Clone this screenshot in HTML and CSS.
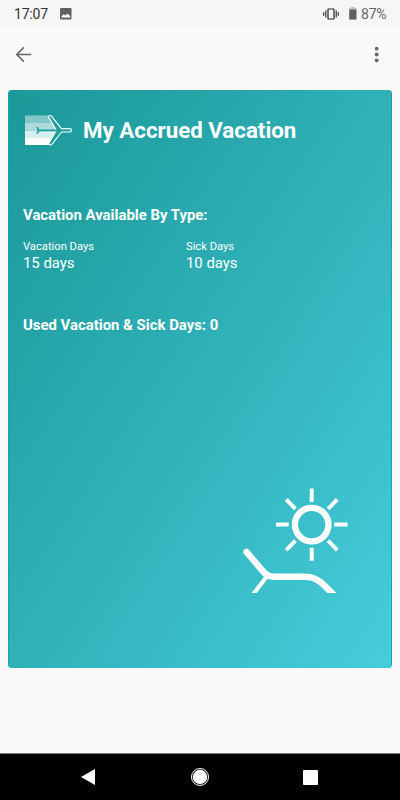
FILE: index.html
```html
<!DOCTYPE html>
<html lang="en">
<head>
<meta charset="utf-8">
<title>My Accrued Vacation</title>
<link rel="stylesheet" href="styles.css">
</head>
<body>
<div class="screen">
  <header class="status">
    <span class="time">17:07</span>
    <svg class="photo" width="12" height="12" viewBox="0 0 12 12"><rect width="11.5" height="11.5" rx="1" fill="#616161"/><path d="M1.5 9.5V8.2L3.7 6.3l1.6 1.3L7.5 5.5l2.7 2.7v1.3z" fill="#fff"/></svg>
    <svg class="vibrate" width="16" height="12" viewBox="0 0 16 12" fill="none" stroke="#222"><rect x="5" y="1" width="6" height="10" rx=".5" stroke-width="1.2"/><path d="M2.8 2.5v7M13.2 2.5v7M.7 4.3v3.4M15.3 4.3v3.4" stroke-width="1.1"/></svg>
    <svg class="battery" width="8" height="13" viewBox="0 0 8 13"><path d="M2 0h3.5v1.2h2V3H.2V1.2H2z" fill="#bbb"/><path d="M.2 2.6h7.3v10H.2z" fill="#5f5f5f"/></svg>
    <span class="percent">87%</span>
  </header>
  <nav class="toolbar">
    <svg width="18" height="18" viewBox="0 0 18 18" fill="none" stroke="#66666d" stroke-width="1.6"><path d="M16.2 8.5H1.7M8.9 1.4 1.8 8.5l7.1 7.1"/></svg>
    <svg width="6" height="18" viewBox="0 0 6 18" fill="#66666d"><circle cx="2.7" cy="2.7" r="1.9"/><circle cx="2.7" cy="8.5" r="1.9"/><circle cx="2.7" cy="14.3" r="1.9"/></svg>
  </nav>
  <main class="card">
    <div class="heading">
      <svg width="50" height="32" viewBox="0 0 50 32">
        <path d="M2 1.5h24l5 7.5H2z" fill="#83c8c8"/><path d="M2 9h29l4 7.5H2z" fill="#addada"/><path d="M2 16.5h33l-4 7.5H2z" fill="#d5eeee"/><path d="M2 24h29l-4.5 7H2z" fill="#fff"/>
        <path d="M33.4 16.3 25.6 3q.4-2.3 2.6-1.2l10.3 12.8H47q3.2 1.7 0 3.4h-8.5L28.7 30.7q-2.2.9-2.9-1.3z" fill="#1f9d9f" stroke="#fff" stroke-width="1.1" stroke-linejoin="round"/>
        <path d="M13.2 12.7q2.4-.2 3.2 2.7H36v1.8H16.4q-.8 2.9-3.2 2.7l1.3-3.6z" fill="#1f9d9f"/>
      </svg>
      <h1>My Accrued Vacation</h1>
    </div>
    <h2 class="available">Vacation Available By Type:</h2>
    <dl class="types">
      <div><dt>Vacation Days</dt><dd>15 days</dd></div>
      <div><dt>Sick Days</dt><dd>10 days</dd></div>
    </dl>
    <h2 class="used">Used Vacation &amp; Sick Days: 0</h2>
    <svg class="lounger" width="106" height="106" viewBox="0 0 106 106" fill="none" stroke="#fff">
      <circle cx="68.7" cy="37.6" r="16.8" stroke-width="6.3"/>
      <path d="M68.7 1.5v13.4M68.7 60.8v13M33 37.6h12.7M91.3 37.6h13.3M43.2 12.4l9.2 9.5M94.3 12.4l-9.2 9.5M43.2 63.1l9.2-9.5M94.3 63.1l-9.2-9.5" stroke-width="4"/>
      <path d="M3.5 65 20.5 84.8Q24.5 89.5 31 89.7h31Q71 89.7 78.5 95.8L92 109" stroke-width="6.5" stroke-linecap="round" stroke-linejoin="round"/>
      <path d="M23.5 90 9.5 108" stroke-width="4"/>
    </svg>
  </main>
  <footer class="navigation">
    <svg width="14" height="16" viewBox="0 0 14 16"><path d="M14 0v16L0 8z" fill="#fff"/></svg>
    <svg class="home" width="18" height="18" viewBox="0 0 18 18"><circle cx="9" cy="9" r="8.5" fill="none" stroke="#fff"/><circle cx="9" cy="9" r="7.2" fill="#fff"/></svg>
    <svg width="15" height="15" viewBox="0 0 15 15"><rect width="15" height="15" rx="1" fill="#fff"/></svg>
  </footer>
</div>
</body>
</html>
```
FILE: styles.css
```css
* { box-sizing: border-box; margin: 0; padding: 0; }
body { font-family: Roboto, "Liberation Sans", sans-serif; background: #fafafa; }
svg { display: block; flex: none; }
.screen { width: 400px; height: 800px; display: flex; flex-direction: column; overflow: hidden; }
.status { height: 27px; background: #f6f6f6; display: flex; align-items: center; padding: 0 13px 0 14px; font-size: 14px; color: #333; }
.time { width: 46px; line-height: 16px; padding-top: 1px; letter-spacing: -.2px; }
.vibrate { margin-left: auto; margin-right: 10px; }
.battery { margin-right: 4px; }
.percent { color: #666; line-height: 16px; padding-top: 1px; width: 26px; white-space: nowrap; letter-spacing: -.2px; }
.toolbar { height: 63px; display: flex; justify-content: space-between; padding: 19px 20px 0 15px; }
.card { width: 384px; height: 577.5px; margin: 0 8px; padding: 0 15px; border-radius: 4px; border: solid #12a7ac; border-width: 0 1px; background: linear-gradient(to bottom right, #1b9898, #2fb1b8 50%, #46ccdb); color: #fff; display: flex; flex-direction: column; flex: none; }
.heading { display: flex; gap: 10px; padding-top: 24px; height: 116px; margin-left: -1px; }
h1 { font-size: 22.3px; line-height: 32px; font-weight: 700; white-space: nowrap; }
h2 { font-size: 14.9px; line-height: 18px; font-weight: 700; margin-left: -1px; }
.types { display: grid; grid-template-columns: 163px 1fr; margin: 15px 0 0 -1px; }
dt { font-size: 11.2px; line-height: 15px; }
dd { font-size: 14.9px; line-height: 18px; }
.used { margin-top: 44px; }
.lounger { margin: auto 27px 74.5px auto; }
.navigation { margin-top: auto; height: 47px; background: #000; border-top: 1px solid #777; display: flex; align-items: center; justify-content: space-between; padding: 0 82px 0 81px; }
.home { margin-left: 1px; }
```
